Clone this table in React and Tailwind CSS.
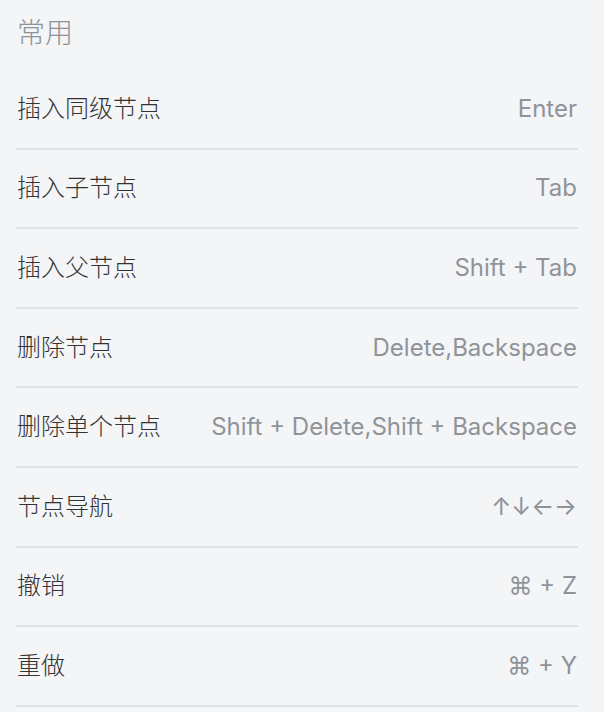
import React from "react";

const shortcuts = [
    { name: "插入同级节点", keys: "Enter" },
    { name: "插入子节点", keys: "Tab" },
    { name: "插入父节点", keys: "Shift + Tab" },
    { name: "删除节点", keys: "Delete,Backspace" },
    { name: "删除单个节点", keys: "Shift + Delete,Shift + Backspace" },
    { name: "节点导航", keys: "↑↓←→" },
    { name: "撤销", keys: "⌘ + Z" },
    { name: "重做", keys: "⌘ + Y" },
];

const App = () => {
    return (
        <div
            className="min-h-screen bg-[#f4f5f7] px-4 overflow-hidden"
            style={{ fontFamily: "Inter, 'Noto Sans CJK SC', sans-serif" }}
        >
            <div className="h-[70px] flex items-center pl-[1px] pb-[5px] text-[28px] font-light text-[#8e9298]">常用</div>
            <div className="pr-[10px]">
                {shortcuts.map((item, i) => (
                    <div
                        key={i}
                        className="h-[79.6px] flex items-center justify-between border-b-2 border-[#e0e1e4] pl-[1px]"
                    >
                        <span className="text-[24px] font-light text-[#333]">{item.name}</span>
                        <span className="text-[24px] text-[#8f939a] pr-[1px]">{item.keys}</span>
                    </div>
                ))}
            </div>
        </div>
    );
};

export default App;
